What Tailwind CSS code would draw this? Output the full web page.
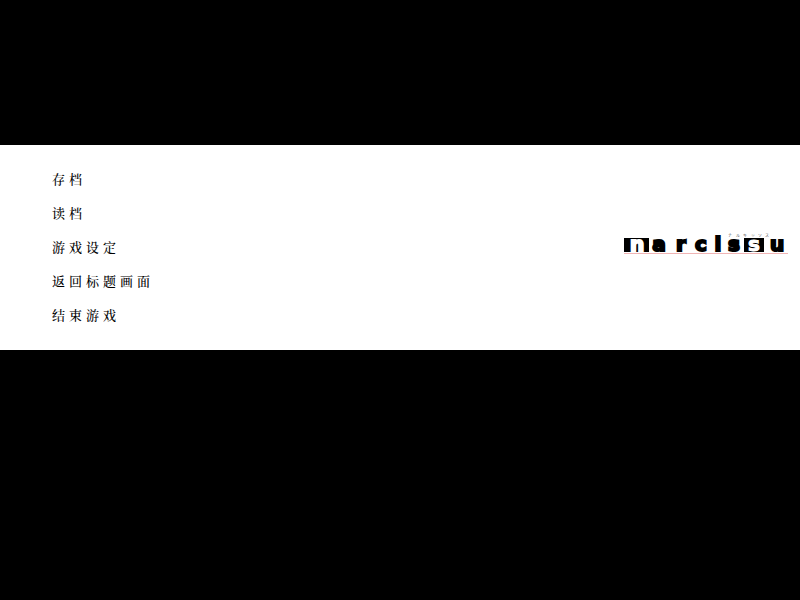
<!DOCTYPE html>
<html lang="zh-CN">
<head>
<meta charset="utf-8">
<title>narcissu</title>
<script src="https://cdn.jsdelivr.net/npm/@tailwindcss/browser@4"></script>
</head>
<body class="min-h-screen bg-black pt-[145px]">
<main class="flex items-center justify-between bg-white pt-[18px] pb-[17px] pl-[52px] pr-3 text-black">
  <nav aria-label="系统菜单" class="flex flex-col items-start font-['Liberation_Serif','Noto_Serif_CJK_SC','Noto_Sans_CJK_SC',serif] text-[13px] font-medium tracking-[4px]">
    <button type="button" class="h-[34px]">存档</button>
    <button type="button" class="h-[34px]">读档</button>
    <button type="button" class="h-[34px]">游戏设定</button>
    <button type="button" class="h-[34px]">返回标题画面</button>
    <button type="button" class="h-[34px]">结束游戏</button>
  </nav>
  <svg width="164" height="20" viewBox="0 0 164 20" role="img" aria-label="narcissu" class="mb-[6px] shrink-0 overflow-visible font-['DejaVu_Sans',sans-serif]">
    <rect x="0" y="3" width="25" height="14"/>
    <rect x="120" y="3" width="20" height="14"/>
    <g font-size="20" font-weight="700" text-anchor="middle">
      <text y="16" x="35 57 77 94 110 153" stroke="#000" stroke-width="2">arcisu</text>
      <text y="16" x="13" fill="#fff" stroke="#fff" stroke-width="2">n</text>
      <text y="16" x="130" fill="#fff" stroke="#fff" stroke-width="1">s</text>
    </g>
    <text y="2" font-size="4" fill="#555" x="104 112 119 127 134 141" class="font-['Noto_Sans_CJK_JP',sans-serif]">ナルキッソス</text>
    <path d="M0 18.5H164" stroke="#f0b4b4"/>
  </svg>
</main>
</body>
</html>
